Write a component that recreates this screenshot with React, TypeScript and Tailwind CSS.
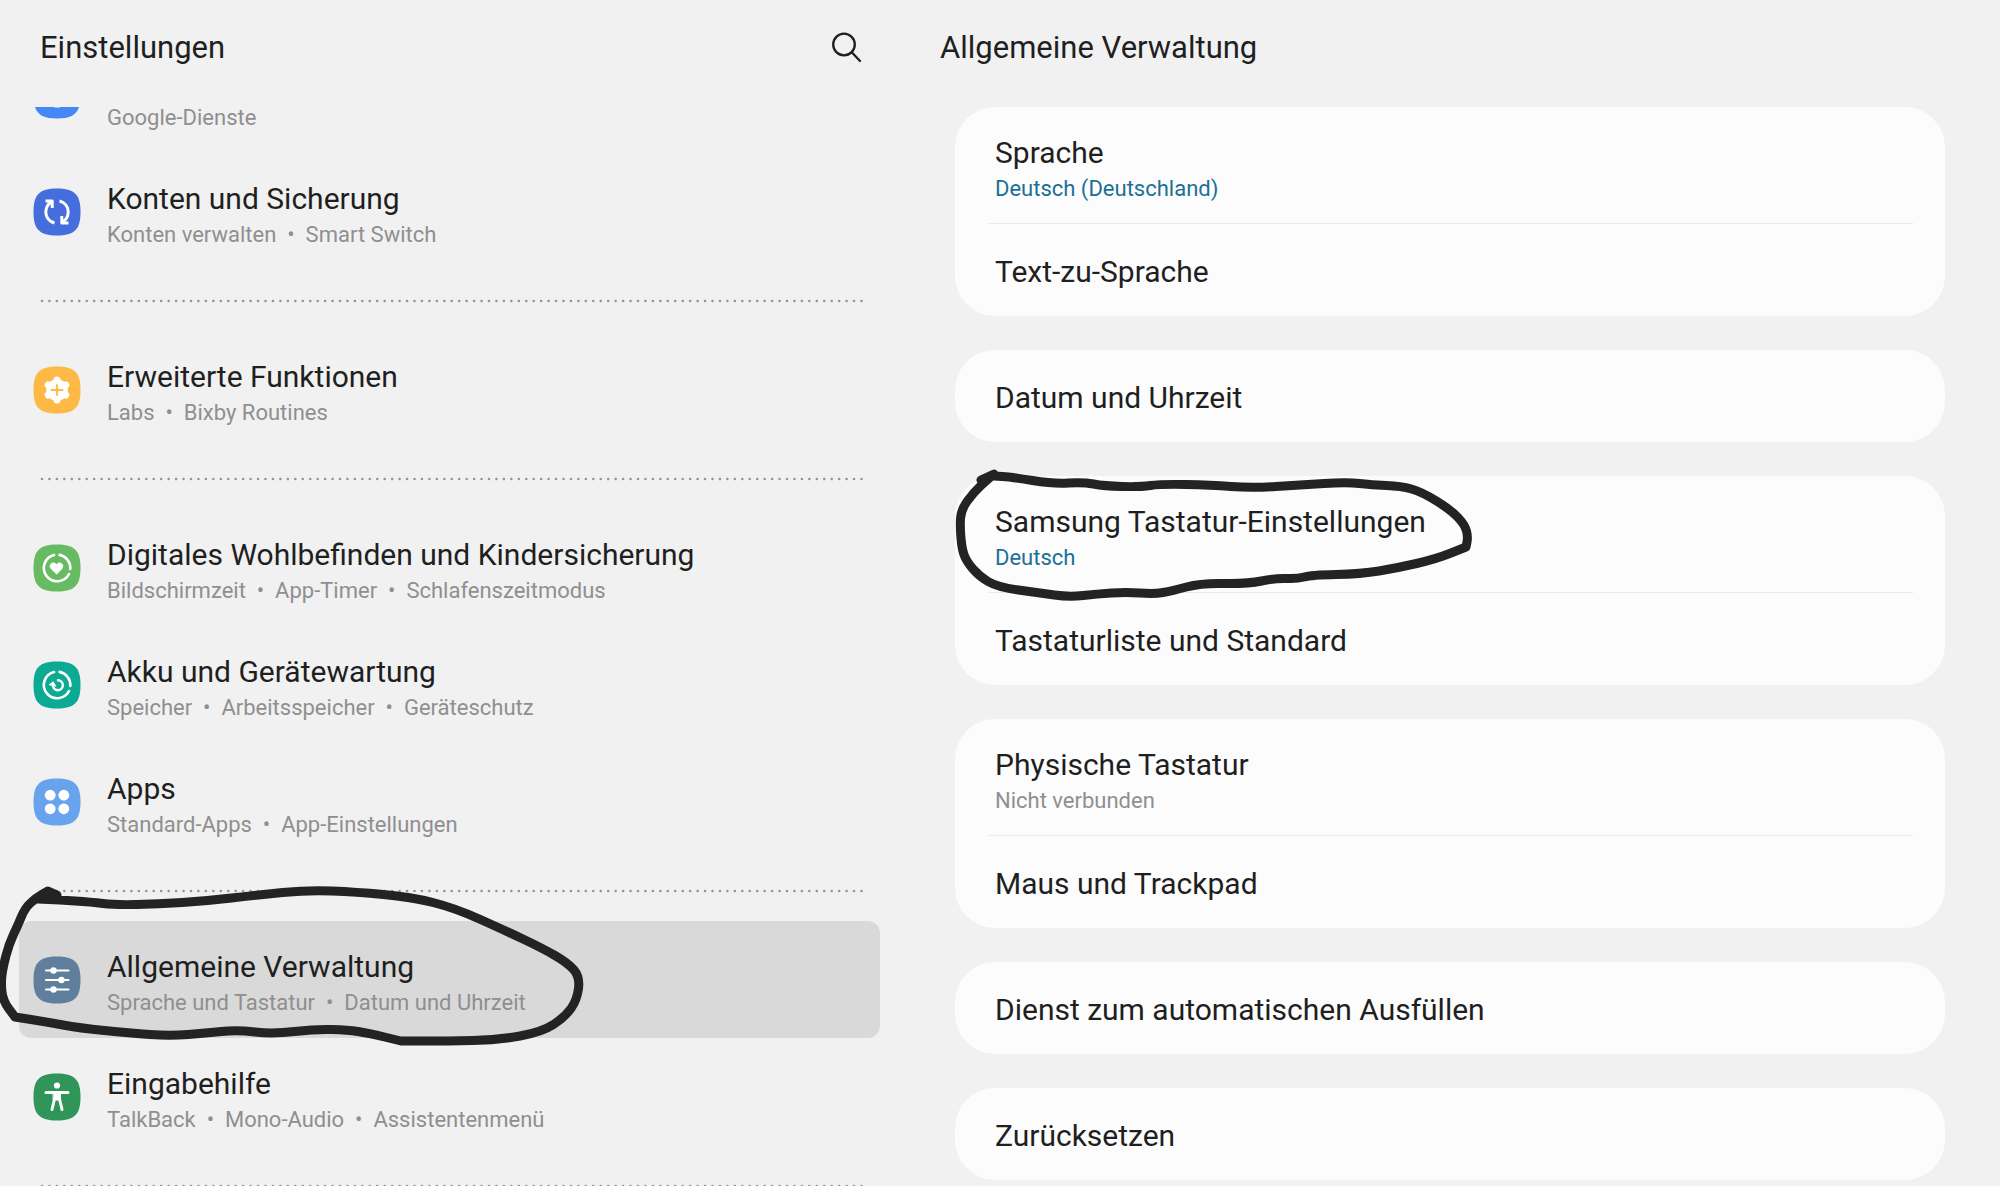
import React from "react";

type Point = [number, number];

type MenuEntry = {
  id: string;
  title?: string;
  details: string[];
  color: string;
  icon: React.ReactNode;
  selected?: boolean;
};

type SettingEntry = {
  title: string;
  value?: string;
  muted?: boolean;
  marked?: boolean;
};

// Glyphs are drawn around the centre of the tile
const ring = (
  <path
    d="M2.6 -13.1A13.3 13.3 0 0 1 13.3 1M12 6A13.3 13.3 0 1 1 -2.9 -13"
    strokeWidth="2.6"
  />
);

const MENU_GROUPS: MenuEntry[][] = [
  [
    {
      id: "google",
      details: ["Google-Dienste"],
      color: "#4487f6",
      icon: <circle r="11" strokeWidth="3" />,
    },
    {
      id: "accounts",
      title: "Konten und Sicherung",
      details: ["Konten verwalten", "Smart Switch"],
      color: "#456ddc",
      icon: (
        <g strokeWidth="3" strokeLinecap="butt">
          <path d="M-2.5 11C-8 9.5 -11.2 5 -11.2 0C-11.2 -4.5 -9 -8 -5 -10.5" />
          <path d="M-11.5 -11H-4.8V-4" />
          <path d="M2.5 -11C8 -9.5 11.2 -5 11.2 0C11.2 4.5 9 8 5 10.5" />
          <path d="M11.5 11H4.8V4" />
        </g>
      ),
    },
  ],
  [
    {
      id: "advanced",
      title: "Erweiterte Funktionen",
      details: ["Labs", "Bixby Routines"],
      color: "#fdb846",
      icon: (
        <>
          <circle r="10.8" fill="#fff" stroke="none" />
          <path
            d="M0 -10V10M-8.8 -5L8.8 5M-8.8 5L8.8 -5"
            strokeWidth="7"
          />
          <path d="M0 -5V5M-5.5 0H5.5" stroke="#fdb846" strokeWidth="1.8" />
        </>
      ),
    },
  ],
  [
    {
      id: "wellbeing",
      title: "Digitales Wohlbefinden und Kindersicherung",
      details: ["Bildschirmzeit", "App-Timer", "Schlafenszeitmodus"],
      color: "#67bb62",
      icon: (
        <>
          {ring}
          <path
            d="M-0.5 6L-6 0.5C-9 -3 -4 -7.5 -0.5 -3.5C3 -7.5 8 -3 5 0.5Z"
            fill="#fff"
            strokeWidth="0.8"
          />
        </>
      ),
    },
    {
      id: "battery",
      title: "Akku und Gerätewartung",
      details: ["Speicher", "Arbeitsspeicher", "Geräteschutz"],
      color: "#0caa92",
      icon: (
        <>
          {ring}
          <path d="M1 -4.8A5 5 0 1 1 -4 1.5" strokeWidth="2.4" />
          <path
            d="M-7.5 -0.5L-3.8 -3.2L-1.5 0.8Z"
            fill="#fff"
            strokeWidth="1"
          />
        </>
      ),
    },
    {
      id: "apps",
      title: "Apps",
      details: ["Standard-Apps", "App-Einstellungen"],
      color: "#68a4ee",
      icon: (
        <g fill="#fff" stroke="none">
          <circle cx="-6.8" cy="-6.8" r="5.4" />
          <circle cx="6.8" cy="-6.8" r="5.4" />
          <circle cx="-6.8" cy="6.8" r="5.4" />
          <circle cx="6.8" cy="6.8" r="5.4" />
        </g>
      ),
    },
  ],
  [
    {
      id: "general",
      title: "Allgemeine Verwaltung",
      details: ["Sprache und Tastatur", "Datum und Uhrzeit"],
      color: "#5f7f9c",
      selected: true,
      icon: (
        <>
          <path
            d="M-11 -9.5H11.5M-11 0H11.5M-11 9.5H11.5"
            strokeWidth="2.2"
          />
          <g fill="#fff" stroke="none">
            <circle cx="-3.5" cy="-9.5" r="3.2" />
            <circle cx="4.5" cy="0" r="3.2" />
            <circle cx="-3.5" cy="9.5" r="3.2" />
          </g>
        </>
      ),
    },
    {
      id: "accessibility",
      title: "Eingabehilfe",
      details: ["TalkBack", "Mono-Audio", "Assistentenmenü"],
      color: "#2f9559",
      icon: (
        <>
          <circle cy="-11.5" r="3.1" fill="#fff" stroke="none" />
          <path d="M-11 -4.5H11" strokeWidth="3" />
          <path d="M-3.5 -4H3.5V3H-3.5Z" fill="#fff" strokeWidth="1" />
          <path d="M-2.5 2L-5 12.5M2.5 2L5 12.5" strokeWidth="3" />
        </>
      ),
    },
  ],
];

const SETTING_CARDS: SettingEntry[][] = [
  [
    { title: "Sprache", value: "Deutsch (Deutschland)" },
    { title: "Text-zu-Sprache" },
  ],
  [{ title: "Datum und Uhrzeit" }],
  [
    { title: "Samsung Tastatur-Einstellungen", value: "Deutsch", marked: true },
    { title: "Tastaturliste und Standard" },
  ],
  [
    { title: "Physische Tastatur", value: "Nicht verbunden", muted: true },
    { title: "Maus und Trackpad" },
  ],
  [{ title: "Dienst zum automatischen Ausfüllen" }],
  [{ title: "Zurücksetzen" }],
];

// A repeated point makes a sharp turn
const MENU_MARK: Point[] = [
  [57, 35], [48, 31], [48, 31], [36, 38], [25, 48], [18, 65], [9, 84],
  [3, 107], [1, 123], [3, 141], [15, 157], [15, 157], [47, 162], [79, 168],
  [130, 173], [170, 176], [206, 173], [237, 170], [273, 174], [316, 169],
  [348, 170], [368, 173], [401, 181], [401, 181], [447, 181], [498, 180],
  [542, 172], [565, 157], [577, 140], [580, 117], [568, 103], [542, 88],
  [506, 71], [455, 48], [411, 37], [356, 32], [308, 30], [257, 35],
  [206, 41], [158, 44], [115, 45], [91, 42], [59, 40], [38, 39],
];

const SETTING_MARK: Point[] = [
  [26, 30], [39, 24], [39, 24], [33, 29], [18, 43], [6, 60], [5, 77],
  [7, 100], [12, 112], [24, 126], [42, 137], [85, 143], [114, 147],
  [142, 144], [171, 142], [199, 144], [217, 141], [246, 133], [292, 134],
  [321, 128], [342, 129], [356, 125], [406, 124], [442, 118], [481, 109],
  [511, 97], [511, 97], [513, 87], [510, 75], [496, 60], [467, 42],
  [446, 36], [417, 35], [392, 32], [346, 35], [296, 38], [256, 35],
  [206, 34], [185, 37], [149, 36], [128, 32], [99, 34], [56, 27], [39, 26],
];

// Runs a smooth curve through the midpoints of a hand-drawn line
function strokePath(points: Point[]) {
  let d = `M${points[0][0]} ${points[0][1]}`;
  for (let i = 1; i < points.length - 1; i++) {
    const [x, y] = points[i];
    const [nx, ny] = points[i + 1];
    d += `Q${x} ${y} ${(x + nx) / 2} ${(y + ny) / 2}`;
  }
  const last = points[points.length - 1];
  return `${d}L${last[0]} ${last[1]}`;
}

function PenMark({ points, className }: { points: Point[]; className: string }) {
  return (
    <svg
      className={`pointer-events-none absolute overflow-visible ${className}`}
      width="600"
      height="200"
      fill="none"
      stroke="#232323"
      strokeWidth="9"
      strokeLinecap="round"
      strokeLinejoin="round"
      aria-hidden="true"
    >
      <path d={strokePath(points)} />
    </svg>
  );
}

function Divider() {
  return (
    <div role="separator" className="flex h-[61px] items-center pr-8 pl-10">
      <svg className="h-1 w-full" aria-hidden="true">
        <line
          x1="2"
          y1="2"
          x2="100%"
          y2="2"
          stroke="#949494"
          strokeWidth="2.6"
          strokeLinecap="round"
          strokeDasharray="0 7.45"
        />
      </svg>
    </div>
  );
}

function MenuRow({ entry }: { entry: MenuEntry }) {
  return (
    <li className="relative mr-5 ml-[19px]">
      <button
        type="button"
        className={`flex h-[117px] w-full items-center rounded-xl pl-[14px] text-left ${
          entry.selected ? "bg-[#d9d9d9]" : ""
        }`}
      >
        <svg
          className="size-12 shrink-0"
          viewBox="-24 -24 48 48"
          fill="none"
          stroke="#fff"
          strokeLinecap="round"
          strokeLinejoin="round"
          aria-hidden="true"
        >
          <path
            d="M0 -23.5C-17.5 -23.5 -23.5 -17.5 -23.5 0S-17.5 23.5 0 23.5S23.5 17.5 23.5 0S17.5 -23.5 0 -23.5Z"
            fill={entry.color}
            stroke="none"
          />
          {entry.icon}
        </svg>
        <span className="flex h-full flex-col pt-[26px] pl-[26px]">
          <span className="h-10 text-[30px] leading-10 text-[#1f1f1f]">
            {entry.title}
          </span>
          <span className="text-[22px] leading-8 text-[#8f8f8f]">
            {entry.details.join("\u00a0 •\u00a0 ")}
          </span>
        </span>
      </button>
      {entry.selected && (
        <PenMark points={MENU_MARK} className="-top-[61px] -left-[19px]" />
      )}
    </li>
  );
}

function SettingRow({ entry }: { entry: SettingEntry }) {
  return (
    <li className="group relative">
      <button
        type="button"
        className={`flex w-full flex-col px-10 text-left ${
          entry.value ? "h-[117px] pt-[26px]" : "h-[92px] pt-7"
        }`}
      >
        <span className="text-[30px] leading-10 text-[#1f1f1f]">
          {entry.title}
        </span>
        {entry.value && (
          <span
            className={`text-[22px] leading-8 ${
              entry.muted ? "text-[#8f8f8f]" : "text-[#1b7096]"
            }`}
          >
            {entry.value}
          </span>
        )}
      </button>
      <div className="mr-8 ml-[34px] -mt-px h-px bg-[#e8e8e8] group-last:hidden" />
      {entry.marked && (
        <PenMark points={SETTING_MARK} className="-top-[26px] left-0" />
      )}
    </li>
  );
}

export default function App() {
  return (
    <div className="flex h-screen overflow-hidden bg-[#f1f1f1] font-['Roboto',sans-serif]">
      <aside className="flex w-[45%] flex-col">
        <header className="flex h-[107px] shrink-0 items-start justify-between pt-7 pr-[36px] pl-10">
          <h1 className="text-[31px] leading-10 text-[#1f1f1f]">
            Einstellungen
          </h1>
          <button type="button" aria-label="Suchen" className="size-10">
            <svg
              viewBox="0 0 40 40"
              fill="none"
              stroke="#1f1f1f"
              strokeWidth="2.3"
              strokeLinecap="round"
            >
              <circle cx="20" cy="16.5" r="10.8" />
              <path d="M28 24.5L36 33" />
            </svg>
          </button>
        </header>
        <nav className="min-h-0 flex-1 overflow-hidden">
          {/* the list is scrolled down past most of the first entry */}
          <div className="-mt-[71px]">
            {MENU_GROUPS.map((group) => (
              <React.Fragment key={group[0].id}>
                <ul>
                  {group.map((entry) => (
                    <MenuRow key={entry.id} entry={entry} />
                  ))}
                </ul>
                <Divider />
              </React.Fragment>
            ))}
          </div>
        </nav>
      </aside>
      <main className="flex min-w-0 flex-1 flex-col">
        <header className="h-[107px] shrink-0 pt-7 pl-10">
          <h2 className="text-[31px] leading-10 text-[#1f1f1f]">
            Allgemeine Verwaltung
          </h2>
        </header>
        <div className="flex flex-col gap-[34px] px-[55px]">
          {SETTING_CARDS.map((card) => (
            <ul key={card[0].title} className="rounded-[40px] bg-[#fcfcfc]">
              {card.map((entry) => (
                <SettingRow key={entry.title} entry={entry} />
              ))}
            </ul>
          ))}
        </div>
      </main>
    </div>
  );
}
